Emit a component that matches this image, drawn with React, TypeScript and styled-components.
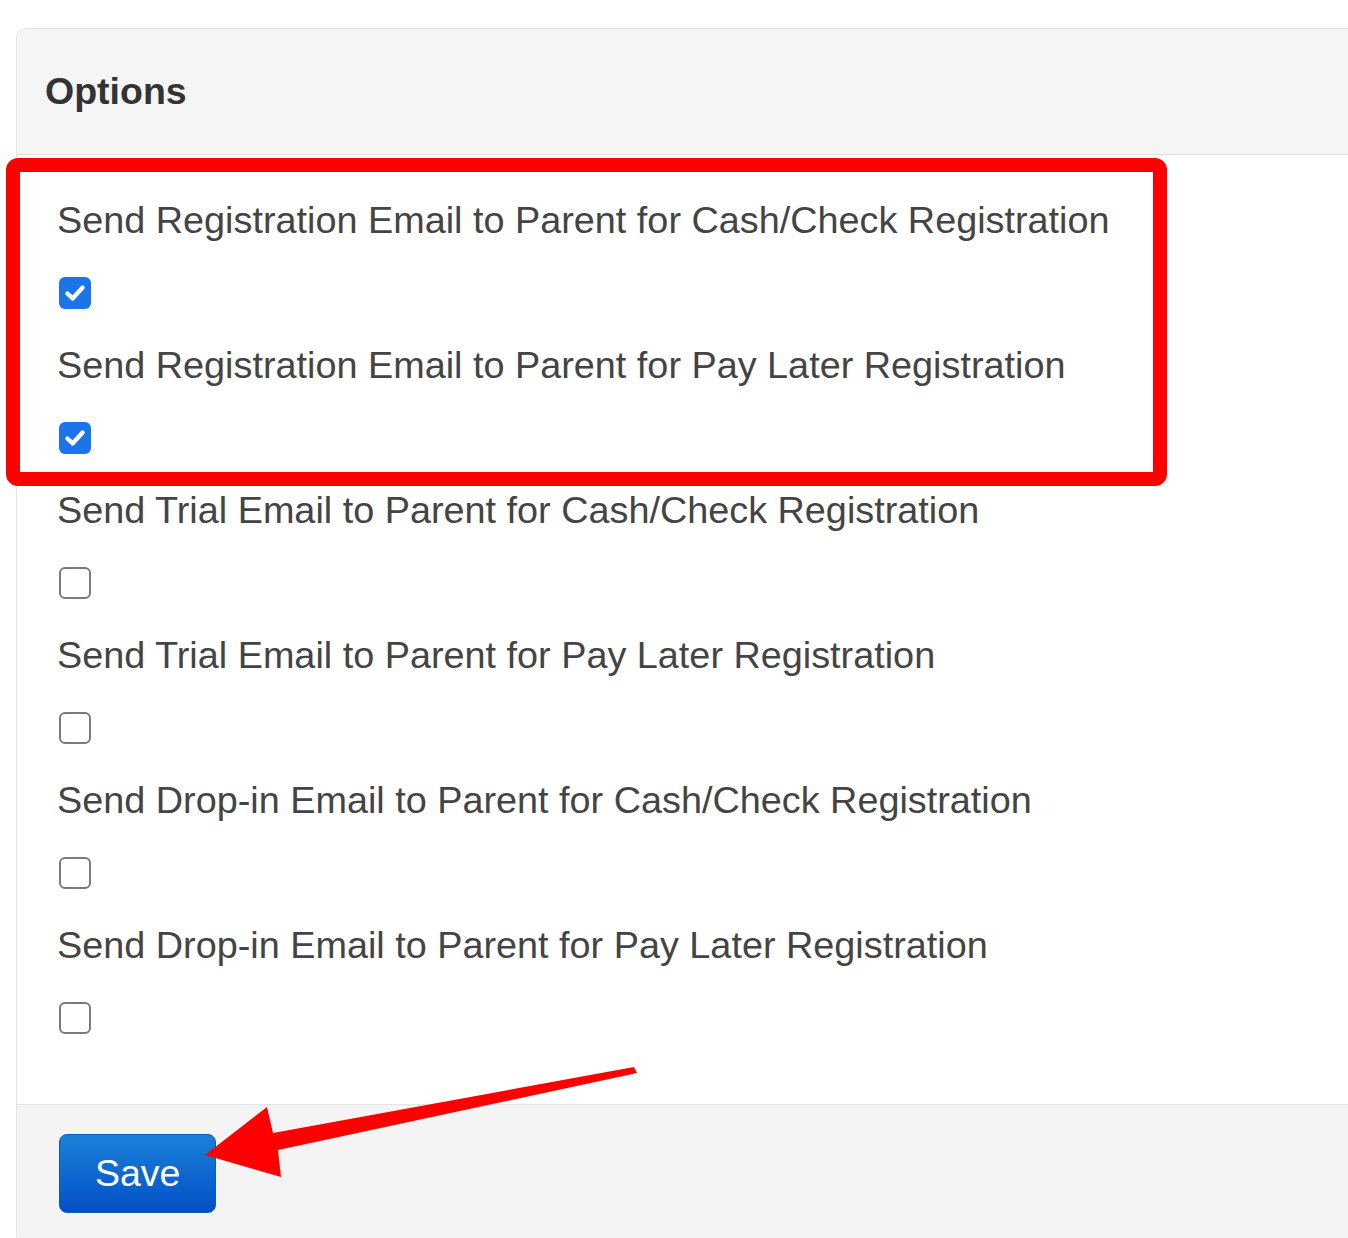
import React from "react";
import styled, { createGlobalStyle } from "styled-components";

const GlobalStyle = createGlobalStyle`
  html, body {
    margin: 0;
    padding: 0;
    overflow: hidden;
    background: #ffffff;
    font-family: "Liberation Sans", Arial, sans-serif;
  }
`;

const Page = styled.div`
  position: relative;
  width: 1348px;
  height: 1238px;
  overflow: hidden;
  padding-top: 28px;
  box-sizing: border-box;
`;

const Panel = styled.section`
  margin-left: 16px;
  width: 1400px;
  border: 1px solid #e2e2e2;
  border-radius: 10px 0 0 10px;
  background: #ffffff;
`;

const PanelHeader = styled.header`
  background: #f5f5f5;
  border-bottom: 1px solid #e0e0e0;
  border-top-left-radius: 9px;
  padding: 36px 28px;
`;

const Title = styled.h3`
  margin: 0;
  font-size: 37.5px;
  line-height: 53px;
  font-weight: 700;
  color: #333333;
`;

const PanelBody = styled.div`
  padding: 38px 40px 41px;
  display: flex;
  flex-direction: column;
`;

const Highlight = styled.div`
  position: relative;
  display: flex;
  flex-direction: column;

  &::after {
    content: "";
    position: absolute;
    left: -51px;
    top: -35px;
    width: 1161px;
    height: 328px;
    box-sizing: border-box;
    border: 14px solid #ff0000;
    border-radius: 12px;
    pointer-events: none;
  }
`;

const OptionGroup = styled.div`
  display: flex;
  flex-direction: column;
  align-items: flex-start;
  padding-bottom: 29px;
`;

const OptionLabel = styled.label`
  display: block;
  font-size: 37.8px;
  line-height: 54px;
  color: #444444;
  margin-bottom: 30px;
`;

const Box = styled.span<{ $checked: boolean }>`
  display: inline-flex;
  align-items: center;
  justify-content: center;
  width: 32px;
  height: 32px;
  box-sizing: border-box;
  margin-left: 2px;
  border-radius: 6px;
  background: ${(p) => (p.$checked ? "#1b74e9" : "#ffffff")};
  border: ${(p) => (p.$checked ? "none" : "2.5px solid #7a7a7a")};
`;

const PanelFooter = styled.footer`
  background: #f4f4f4;
  border-top: 1px solid #e4e4e4;
  border-bottom-left-radius: 9px;
  padding: 29px 40px 30px;
`;

const SaveButton = styled.button`
  font-family: "Liberation Sans", Arial, sans-serif;
  font-size: 37.5px;
  line-height: 54px;
  color: #ffffff;
  padding: 11px 35px 12px;
  margin-left: 2px;
  border: 1px solid #0b5bc0;
  border-radius: 8px;
  background: linear-gradient(to bottom, #1a80d8 0%, #0c63cf 60%, #0350c4 100%);
  cursor: pointer;
`;

const ArrowSvg = styled.svg`
  position: absolute;
  left: 0;
  top: 1040px;
  pointer-events: none;
`;

function Checkbox({ checked }: { checked: boolean }) {
  return (
    <Box $checked={checked} role="checkbox" aria-checked={checked}>
      {checked && (
        <svg width="26" height="26" viewBox="0 0 24 24">
          <path
            d="M5 12.5 L9.8 17 L19 7"
            fill="none"
            stroke="#ffffff"
            strokeWidth="4"
            strokeLinecap="round"
            strokeLinejoin="round"
          />
        </svg>
      )}
    </Box>
  );
}

function Option({ label, checked }: { label: string; checked: boolean }) {
  return (
    <OptionGroup>
      <OptionLabel>{label}</OptionLabel>
      <Checkbox checked={checked} />
    </OptionGroup>
  );
}

const highlighted = [
  "Send Registration Email to Parent for Cash/Check Registration",
  "Send Registration Email to Parent for Pay Later Registration",
];

const others = [
  "Send Trial Email to Parent for Cash/Check Registration",
  "Send Trial Email to Parent for Pay Later Registration",
  "Send Drop-in Email to Parent for Cash/Check Registration",
  "Send Drop-in Email to Parent for Pay Later Registration",
];

export default function App() {
  return (
    <>
      <GlobalStyle />
      <Page>
        <Panel>
          <PanelHeader>
            <Title>Options</Title>
          </PanelHeader>
          <PanelBody>
            <Highlight>
              {highlighted.map((l) => (
                <Option key={l} label={l} checked />
              ))}
            </Highlight>
            {others.map((l) => (
              <Option key={l} label={l} checked={false} />
            ))}
          </PanelBody>
          <PanelFooter>
            <SaveButton type="button">Save</SaveButton>
          </PanelFooter>
        </Panel>
        <ArrowSvg width="700" height="160" viewBox="0 1040 700 160">
          <polygon
            points="205,1155 267,1107 273,1133 634,1067 637,1073 278,1150 281,1177"
            fill="#ff0000"
          />
        </ArrowSvg>
      </Page>
    </>
  );
}
